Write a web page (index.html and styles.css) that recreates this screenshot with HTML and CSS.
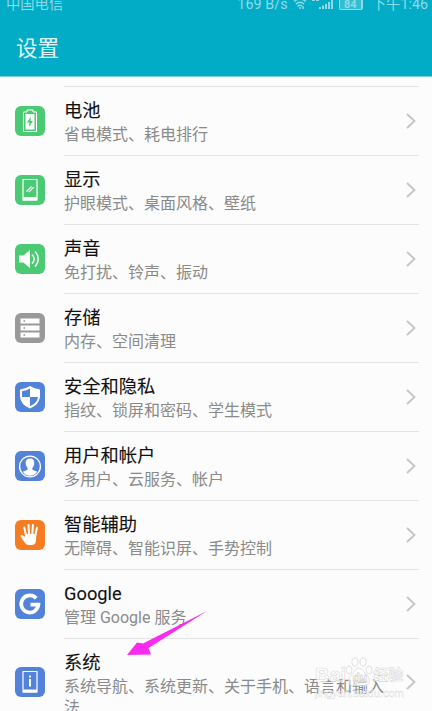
FILE: index.html
```
<!DOCTYPE html>
<html lang="zh-CN">
<head>
<meta charset="utf-8">
<title>设置</title>
<link rel="stylesheet" href="styles.css">
</head>
<body>
<div class="screen">
  <header class="header">
    <div class="status">
      <span>中国电信</span>
      <div class="status-right">
        <span class="speed">169 B/s</span>
        <svg class="wifi" width="14" height="12" viewBox="0 0 14 12" fill="none" stroke="currentColor" stroke-width="1.5"><path d="M1 3.500Q7-1.500 13 3.500M2.800 6Q7 2.400 11.200 6M4.500 8.300Q7 6.300 9 8.300"/><path d="M7 9v2M10 8v3" stroke-width="1.500"/></svg>
        <svg class="signal" width="21" height="12" viewBox="0 0 21 12" fill="currentColor"><path d="M0 1h3v2H0zM4 1h3v2H4zM7 9h2v2H7zM10 7.500h2V11h-2zM13 6h2v5h-2zM16 4h2v7h-2zM19 1h2v10h-2z"/></svg>
        <span class="battery">84</span>
        <span class="time">下午1:46</span>
      </div>
    </div>
    <h1 class="title">设置</h1>
  </header>
  <main class="list">
    <section class="row">
      <svg class="icon green" viewBox="0 0 30 30"><path d="M12 4h6v2h3.500v19.500h-13V6H12z" fill="none" stroke="#fff" stroke-width="1"/><path d="M10.500 8h9v15.500h-9z" fill="#fff"/><path d="M16 10.500l-4 6h2.500L14 21l4-6h-2.500z" fill="#4bca74"/></svg>
      <div class="body"><div class="text"><h2>电池</h2><p>省电模式、耗电排行</p></div><svg class="chevron" viewBox="0 0 10 18"><path d="M1 2l7.500 7L1 16"/></svg></div>
    </section>
    <section class="row">
      <svg class="icon green" viewBox="0 0 30 30"><path d="M8 4.500h14v20.500H8z" fill="none" stroke="#fff" stroke-width="1.200"/><path d="M8 22h14v3.500H8z" fill="#fff"/><path d="M11.500 16.500l5-5M13.800 17.200l5-5" stroke="#fff" stroke-width="1.200"/></svg>
      <div class="body"><div class="text"><h2>显示</h2><p>护眼模式、桌面风格、壁纸</p></div><svg class="chevron" viewBox="0 0 10 18"><path d="M1 2l7.500 7L1 16"/></svg></div>
    </section>
    <section class="row">
      <svg class="icon green" viewBox="0 0 30 30"><path d="M4 11.500h4.500L15 6v18l-6.500-5.500H4z" fill="#fff"/><path d="M17 10.500q4.500 4.500 0 9M20 7.500a10.500 10.500 0 0 1 0 15" fill="none" stroke="#fff" stroke-width="1.500"/></svg>
      <div class="body"><div class="text"><h2>声音</h2><p>免打扰、铃声、振动</p></div><svg class="chevron" viewBox="0 0 10 18"><path d="M1 2l7.500 7L1 16"/></svg></div>
    </section>
    <section class="row">
      <svg class="icon gray" viewBox="0 0 30 30"><path d="M5.500 5.500h19v5h-19zM5.500 12.500h19v5h-19zM5.500 19.500h19v5h-19z" fill="#fff"/><path d="M8.500 7.200h1.600v1.600H8.500zM8.500 14.200h1.600v1.600H8.500zM8.500 21.200h1.600v1.600H8.500z" fill="#999"/></svg>
      <div class="body"><div class="text"><h2>存储</h2><p>内存、空间清理</p></div><svg class="chevron" viewBox="0 0 10 18"><path d="M1 2l7.500 7L1 16"/></svg></div>
    </section>
    <section class="row">
      <svg class="icon blue" viewBox="0 0 30 30"><path d="M15 4q4.500 3 10 3.400v7Q24.500 22.500 15 26.500 5.500 22.500 5 14.400v-7Q10.500 7 15 4z" fill="#fff"/><path d="M15 6.500V15H7V9.200q4.500-.4 8-2.700zM15 15h8q-.5 6-8 9.200z" fill="#5283d9"/></svg>
      <div class="body"><div class="text"><h2>安全和隐私</h2><p>指纹、锁屏和密码、学生模式</p></div><svg class="chevron" viewBox="0 0 10 18"><path d="M1 2l7.500 7L1 16"/></svg></div>
    </section>
    <section class="row">
      <svg class="icon blue" viewBox="0 0 30 30"><circle cx="15" cy="15.500" r="10.400" fill="none" stroke="#fff" stroke-width="1.300"/><path d="M15 7.500c3 0 4.500 2 4.300 4.700-.1 2-.9 3.700-1.900 4.600v2l4.800 1.900q-2.700 4-7.200 4t-7.200-4l4.800-1.900v-2c-1-.9-1.800-2.600-1.900-4.600C10.500 9.500 12 7.500 15 7.500z" fill="#fff"/></svg>
      <div class="body"><div class="text"><h2>用户和帐户</h2><p>多用户、云服务、帐户</p></div><svg class="chevron" viewBox="0 0 10 18"><path d="M1 2l7.500 7L1 16"/></svg></div>
    </section>
    <section class="row">
      <svg class="icon orange" viewBox="0 0 30 30"><path d="M11 15.500L9.300 7.500M14 14.500L13.500 5M17.300 14.500l.6-9.500M20.300 15.500L22 7.500" stroke="#fff" stroke-width="2" stroke-linecap="round"/><path d="M10 14h11.300l-.3 7q-.5 4-4.500 4h-3q-2 0-3.500-2l-4.500-6.500q-.5-1.500 1-1.600 1.900 0 3.500 2z" fill="#fff"/></svg>
      <div class="body"><div class="text"><h2>智能辅助</h2><p>无障碍、智能识屏、手势控制</p></div><svg class="chevron" viewBox="0 0 10 18"><path d="M1 2l7.500 7L1 16"/></svg></div>
    </section>
    <section class="row">
      <svg class="icon blue" viewBox="0 0 30 30"><path d="M21.200 9.200A8.600 8.600 0 1 0 23.400 15.700H15.500" fill="none" stroke="#fff" stroke-width="3.700"/></svg>
      <div class="body"><div class="text"><h2>Google</h2><p>管理 Google 服务</p></div><svg class="chevron" viewBox="0 0 10 18"><path d="M1 2l7.500 7L1 16"/></svg></div>
    </section>
    <section class="row last">
      <svg class="icon blue" viewBox="0 0 30 30"><path d="M8 4.500h14v20.500H8z" fill="none" stroke="#fff" stroke-width="1.200"/><path d="M8 22.500h14v3H8zM14 8.500h2v2h-2zM14 12h2v7.500h-2z" fill="#fff"/></svg>
      <div class="body"><div class="text"><h2>系统</h2><p>系统导航、系统更新、关于手机、语言和输入法</p></div><svg class="chevron" viewBox="0 0 10 18"><path d="M1 2l7.500 7L1 16"/></svg></div>
    </section>
  </main>
  <svg class="arrow" width="82" height="48" viewBox="0 0 82 48"><path d="M81 1L22.500 38l2.500 6.500L1 45 11 32.500l6 1z" fill="#fb2af0"/></svg>
  <div class="watermark">
    <div class="brand"><span>Bai</span><svg width="28" height="30" viewBox="0 0 28 30"><ellipse cx="4" cy="13" rx="3" ry="4"/><ellipse cx="10" cy="5" rx="3" ry="4.200"/><ellipse cx="18" cy="5" rx="3" ry="4.200"/><ellipse cx="24" cy="13" rx="3" ry="4"/><path d="M14 11q3 0 5 4l5 6q2 7-5 8-5-1.500-10 0-7-1-5-8l5-6q2-4 5-4z"/><text x="7.500" y="25">du</text></svg><span>经验</span></div>
    <div class="url">jingyan.baidu.com</div>
  </div>
</div>
</body>
</html>
```
FILE: styles.css
```
* { box-sizing: border-box; }
body {
  margin: 0;
  overflow: hidden;
  background: #fcfcfc;
  font-family: Roboto, "Noto Sans CJK SC", sans-serif;
}
h1, h2, p { margin: 0; font-weight: 400; }
.screen { position: relative; height: 711px; overflow: hidden; }
.header {
  display: flow-root;
  height: 77px;
  background: #02acc6;
  border-bottom: 1px solid #7cd0dd;
  color: #e0f7fa;
}
.status {
  display: flex;
  justify-content: space-between;
  height: 20px;
  margin-top: -6px;
  padding: 0 4px 0 6px;
  color: #8fdae6;
  font-size: 14.3px;
  line-height: 20px;
  white-space: nowrap;
}
.status-right { display: flex; align-items: center; }
.speed { margin-right: -1px; letter-spacing: .1px; }
.wifi { margin-left: 6px; }
.signal { margin-left: 5px; }
.battery {
  width: 24px;
  height: 12px;
  margin: -1px 9px 0 6px;
  border: 1px solid currentColor;
  border-right-width: 2px;
  border-radius: 2px;
  background: rgba(255, 255, 255, .2);
  font-size: 11px;
  font-weight: 700;
  line-height: 11px;
  text-align: center;
}
.title { padding: 18px 0 0 16px; font-size: 21.5px; line-height: 33px; }
.list { padding-top: 9px; }
.row { display: flex; align-items: center; height: 69px; padding: 0 13px 0 15px; }
.icon { flex: none; width: 30px; height: 30px; border-radius: 6px; }
.green { background: #4bca74; }
.gray { background: #999; }
.blue { background: #5283d9; }
.orange { background: #f57c23; }
.body {
  display: flex;
  align-items: center;
  flex: 1;
  height: 100%;
  margin-left: 19px;
  border-top: 1px solid #e4e4e4;
}
.text { flex: 1; align-self: flex-start; padding-top: 11px; white-space: nowrap; }
.text h2 { color: #111; font-size: 18.3px; line-height: 25px; -webkit-text-stroke: .1px; }
.text p { padding-top: 1px; color: #8a8a8a; font-size: 16px; line-height: 21px; }
.chevron {
  flex: none;
  width: 10px;
  height: 18px;
  margin: -1px 3px 0 0;
  fill: none;
  stroke: #c4c4c4;
  stroke-width: 1.8;
}
.last { height: 88px; }
.last .text { white-space: normal; }
.last .text p { width: 322px; }
.arrow { position: absolute; left: 126px; top: 610px; }
.watermark {
  position: absolute;
  left: 315px;
  top: 656px;
  width: 92px;
  color: rgba(255, 255, 255, .7);
  font-family: "Liberation Sans", "Noto Sans CJK SC", sans-serif;
  -webkit-text-stroke: .6px rgba(205, 205, 205, .75);
}
.brand { display: flex; align-items: flex-end; height: 31px; font-size: 20px; font-weight: 700; line-height: 24px; }
.brand span:last-child { font-size: 15px; }
.brand svg { margin-left: -1px; fill: rgba(255, 255, 255, .5); stroke: #d8d8d8; stroke-width: .8; }
.brand text { font-size: 12px; -webkit-text-stroke: 0; }
.url { font-size: 11px; line-height: 12px; -webkit-text-stroke-width: .4px; }
```
